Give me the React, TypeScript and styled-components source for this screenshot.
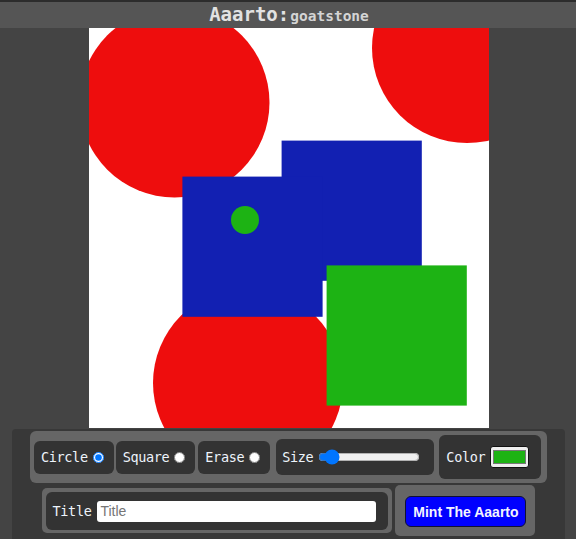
import React, { useState } from "react";
import styled, { createGlobalStyle } from "styled-components";

const Global = createGlobalStyle`
  html, body { margin: 0; padding: 0; background: #444444; }
  body { font-family: "DejaVu Sans Mono", monospace; overflow: hidden; }
`;

const Page = styled.div`
  width: 576px;
  height: 539px;
  display: flex;
  flex-direction: column;
  background: #444444;
`;

const Header = styled.header`
  height: 26px;
  border-top: 2px solid #2c2c2c;
  background: #555555;
  display: flex;
  justify-content: center;
  align-items: baseline;
  line-height: 25px;
  color: #e2e2e2;
  padding-left: 2px;
  font-family: "DejaVu Sans Mono", monospace;
  font-weight: bold;
`;

const Title = styled.span`
  font-size: 19px;
`;

const Owner = styled.span`
  font-size: 14.5px;
  color: #d4d4d4;
  margin-left: 1px;
`;

const CanvasRow = styled.div`
  display: flex;
  justify-content: center;
  padding-left: 2px;
`;

const Canvas = styled.svg`
  display: block;
  width: 400px;
  height: 400px;
  background: #ffffff;
`;

const Panel = styled.div`
  width: 553px;
  margin: 1px 0 0 12px;
  flex: 1;
  background: #383838;
  border-radius: 4px 4px 0 0;
  padding-top: 2px;
  box-sizing: border-box;
`;

const ToolRow = styled.div`
  width: 517px;
  box-sizing: border-box;
  margin: 0 auto;
  height: 52px;
  padding: 0 4px;
  background: #666666;
  border-radius: 6px;
  display: flex;
  align-items: center;
`;

const Box = styled.div<{ $h: number; $ml?: number; $pl?: number; $pr?: number }>`
  height: ${(p) => p.$h}px;
  margin-left: ${(p) => p.$ml ?? 0}px;
  padding: 0 ${(p) => p.$pr ?? 7}px 0 ${(p) => p.$pl ?? 7}px;
  box-sizing: border-box;
  background: #333333;
  border-radius: 6px;
  display: flex;
  align-items: center;
  color: #eef4fb;
  font-size: 13.5px;
  letter-spacing: -0.35px;
  font-family: "DejaVu Sans Mono", monospace;
  white-space: nowrap;
`;

const Radio = styled.input`
  margin: 0 3px 0 5px;
  width: 11px;
  height: 11px;
`;

const Range = styled.input`
  width: 102px;
  margin: 0 2px 0 5px;
`;

const ColorPick = styled.input`
  width: 39px;
  height: 22px;
  box-sizing: border-box;
  margin: 0 0 0 5px;
  padding: 3px 2px;
  border: 1px solid #111111;
  border-radius: 3px;
  background: #efefef;
  cursor: pointer;
  &::-webkit-color-swatch-wrapper { padding: 0; }
  &::-webkit-color-swatch { border: 1px solid #777777; border-radius: 0; }
`;

const BottomRow = styled.div`
  display: flex;
  justify-content: center;
  align-items: center;
  gap: 3px;
  margin-top: 2px;
`;

const Well = styled.div<{ $pad: string }>`
  background: #666666;
  border-radius: 5px;
  padding: ${(p) => p.$pad};
  display: flex;
`;

const TextInput = styled.input`
  width: 279px;
  height: 21px;
  box-sizing: border-box;
  margin-left: 6px;
  border: none;
  border-radius: 3px;
  padding: 0 3px;
  background: #ffffff;
  font-family: "Liberation Sans", Arial, sans-serif;
  font-size: 14px;
  letter-spacing: 0;
  color: #222;
  outline: none;
  &::placeholder { color: #757575; }
`;

const MintButton = styled.button`
  width: 121px;
  height: 31px;
  box-sizing: border-box;
  padding: 0;
  background: #0000ff;
  color: #f4f4ff;
  border: 1px solid #111133;
  border-radius: 6px;
  font-family: "Liberation Sans", Arial, sans-serif;
  font-weight: bold;
  font-size: 14px;
  cursor: pointer;
`;

type Shape =
  | { kind: "circle"; x: number; y: number; r: number; fill: string }
  | { kind: "square"; x: number; y: number; s: number; fill: string };

const RED = "#ee0d0d";
const BLUE = "#1220b2";
const GREEN = "#1db314";

const shapes: Shape[] = [
  { kind: "circle", x: 85.5, y: 74.5, r: 95, fill: RED },
  { kind: "circle", x: 378, y: 20, r: 95, fill: RED },
  { kind: "circle", x: 159, y: 355, r: 95, fill: RED },
  { kind: "square", x: 192.6, y: 112.6, s: 140.2, fill: BLUE },
  { kind: "square", x: 93.4, y: 148.6, s: 140.2, fill: BLUE },
  { kind: "square", x: 237.6, y: 237.4, s: 140.2, fill: GREEN },
  { kind: "circle", x: 156, y: 192, r: 14, fill: GREEN },
];

export default function App() {
  const [tool, setTool] = useState("circle");
  const [size, setSize] = useState(8);
  const [color, setColor] = useState("#1db314");
  const [title, setTitle] = useState("");

  return (
    <Page>
      <Global />
      <Header>
        <Title>Aaarto:</Title>
        <Owner>goatstone</Owner>
      </Header>
      <CanvasRow>
        <Canvas viewBox="0 0 400 400">
          {shapes.map((s, i) =>
            s.kind === "circle" ? (
              <circle key={i} cx={s.x} cy={s.y} r={s.r} fill={s.fill} />
            ) : (
              <rect key={i} x={s.x} y={s.y} width={s.s} height={s.s} fill={s.fill} />
            )
          )}
        </Canvas>
      </CanvasRow>
      <Panel>
        <ToolRow>
          <Box $h={33}>
            Circle
            <Radio type="radio" name="tool" checked={tool === "circle"} onChange={() => setTool("circle")} />
          </Box>
          <Box $h={33} $ml={2}>
            Square
            <Radio type="radio" name="tool" checked={tool === "square"} onChange={() => setTool("square")} />
          </Box>
          <Box $h={33} $ml={3}>
            Erase
            <Radio type="radio" name="tool" checked={tool === "erase"} onChange={() => setTool("erase")} />
          </Box>
          <Box $h={36} $ml={6} $pl={6} $pr={12}>
            Size
            <Range type="range" min={1} max={100} value={size} onChange={(e) => setSize(Number(e.target.value))} />
          </Box>
          <Box $h={44} $ml={5} $pr={12}>
            Color
            <ColorPick type="color" value={color} onChange={(e) => setColor(e.target.value)} />
          </Box>
        </ToolRow>
        <BottomRow>
          <Well $pad="4px 4px 3px 4px">
            <Box $h={38} $pr={12}>
              Title
              <TextInput placeholder="Title" value={title} onChange={(e) => setTitle(e.target.value)} />
            </Box>
          </Well>
          <Well $pad="11px 9px 9px 10px">
            <MintButton>Mint The Aaarto</MintButton>
          </Well>
        </BottomRow>
      </Panel>
    </Page>
  );
}
